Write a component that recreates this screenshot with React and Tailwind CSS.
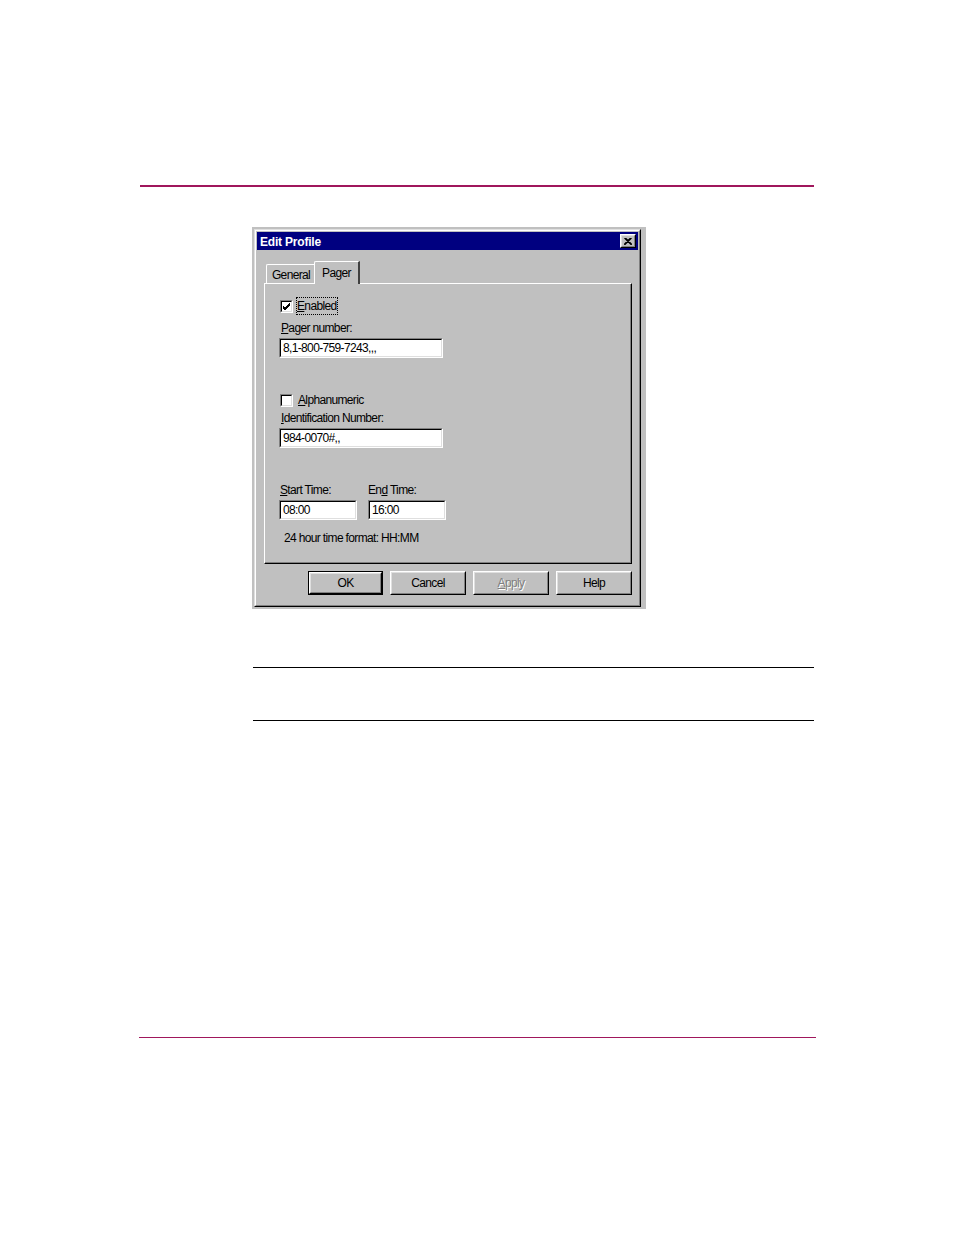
const raised =
  "border border-t-white border-l-white border-r-black border-b-black";

const Field = ({ value, width }) => (
  <div
    className={`${width} h-[20px] border border-t-[#808080] border-l-[#808080] border-r-white border-b-white`}
  >
    <div className="h-full border border-t-black border-l-black border-r-[#dfdfdf] border-b-[#dfdfdf] bg-white pl-[2px] text-[12px] leading-[16px] text-black">
      {value}
    </div>
  </div>
);

const Check = ({ checked }) => (
  <div className="w-[13px] h-[13px] border border-t-[#808080] border-l-[#808080] border-r-white border-b-white">
    <div className="w-full h-full border border-t-black border-l-black border-r-[#dfdfdf] border-b-[#dfdfdf] bg-white flex items-center justify-center">
      {checked && (
        <svg width="9" height="9" viewBox="0 0 9 9">
          <path d="M1 4 L3 6 L8 1 M1 5 L3 7 L8 2 M1 6 L3 8 L8 3" stroke="black" strokeWidth="1" fill="none" />
        </svg>
      )}
    </div>
  </div>
);

const Button = ({ children, isDefault, disabled, width = "w-[76px]" }) => (
  <div className={`${width} h-[24px] ${isDefault ? "border border-black" : ""}`}>
    <div className={`h-full ${raised}`}>
      <div className="h-full border border-t-[#dfdfdf] border-l-[#dfdfdf] border-r-[#808080] border-b-[#808080] flex items-center justify-center text-[12px]">
        {disabled ? (
          <span className="text-[#808080] [text-shadow:1px_1px_0_white]">{children}</span>
        ) : (
          <span className="text-black">{children}</span>
        )}
      </div>
    </div>
  </div>
);

const Label = ({ children, className = "" }) => (
  <div className={`text-[12px] leading-[14px] text-black ${className}`}>{children}</div>
);

export default function App() {
  return (
    <div className="w-[954px] h-[1235px] bg-white font-['Liberation_Sans',Arial,sans-serif] tracking-[-0.65px]">
      <div className="pt-[185px] pl-[140px]">
        <div className="w-[674px] h-[2px] bg-[#a0175c]" />
      </div>

      {/* Dialog */}
      <div className="mt-[40px] ml-[252px] w-[394px] h-[382px] bg-[#c0c0c0] pt-[2px] pl-[2px]">
        <div className="w-[387px] h-[378px] border border-t-[#dfdfdf] border-l-[#dfdfdf] border-r-black border-b-black">
          <div className="h-full border border-t-white border-l-white border-r-[#808080] border-b-[#808080] p-[1px]">
            {/* title bar */}
            <div className="h-[18px] bg-[#000080] flex items-center justify-between pl-[3px] pr-[2px]">
              <span className="text-white font-bold text-[12px] tracking-[-0.2px] pt-[2px]">Edit Profile</span>
              <div className={`w-[16px] h-[14px] bg-[#c0c0c0] ${raised}`}>
                <div className="h-full border border-t-[#dfdfdf] border-l-[#dfdfdf] border-r-[#808080] border-b-[#808080] flex items-center justify-center">
                  <svg width="8" height="7" viewBox="0 0 8 7">
                    <path d="M0.5 0 L7.5 7 M1.5 0 L8 6.5 M7.5 0 L0.5 7 M6.5 0 L0 6.5" stroke="black" strokeWidth="1.2" />
                  </svg>
                </div>
              </div>
            </div>

            {/* tabs */}
            <div className="ml-[7px] mt-[11px] flex items-end h-[22px] pl-[2px] relative z-10">
              <div className="w-[49px] h-[19px] border-t border-l border-white rounded-tl-[2px] flex items-center justify-center text-[12px] text-black pt-[1px]">
                General
              </div>
              <div className="w-[46px] h-[23px] -mb-[1px] -ml-[1px] bg-[#c0c0c0] border-t border-l border-white rounded-tl-[2px] border-r-2 border-r-[#404040] flex items-start justify-center pt-[2px] text-[12px] text-black">
                Pager
              </div>
            </div>

            {/* tab panel */}
            <div className="ml-[7px] w-[368px] h-[281px] border-t border-l border-white border-r border-b border-r-black border-b-black">
              <div className="h-full border-r border-b border-[#808080] pl-[15px] pt-[13px]">
                <div className="flex items-center">
                  <Check checked />
                  <div className="ml-[3px] px-[1px] h-[18px] flex items-center outline-1 outline-dotted outline-black -outline-offset-1">
                    <Label>
                      <span className="underline">E</span>nabled
                    </Label>
                  </div>
                </div>
                <Label className="mt-[6px] ml-[1px]">
                  <span className="underline">P</span>ager number:
                </Label>
                <div className="mt-[3px] -ml-[1px]">
                  <Field value="8,1-800-759-7243,,," width="w-[164px]" />
                </div>

                <div className="flex items-center mt-[35px]">
                  <Check />
                  <Label className="ml-[5px]">
                    <span className="underline">A</span>lphanumeric
                  </Label>
                </div>
                <Label className="mt-[4px] ml-[1px]">
                  <span className="underline">I</span>dentification Number:
                </Label>
                <div className="mt-[3px] -ml-[1px]">
                  <Field value="984-0070#,," width="w-[164px]" />
                </div>

                <div className="flex mt-[35px] -ml-[1px] gap-[11px]">
                  <div>
                    <Label className="ml-[1px]">
                      <span className="underline">S</span>tart Time:
                    </Label>
                    <div className="mt-[3px]">
                      <Field value="08:00" width="w-[78px]" />
                    </div>
                  </div>
                  <div>
                    <Label>
                      En<span className="underline">d</span> Time:
                    </Label>
                    <div className="mt-[3px]">
                      <Field value="16:00" width="w-[78px]" />
                    </div>
                  </div>
                </div>
                <Label className="mt-[11px] ml-[4px]">24 hour time format: HH:MM</Label>
              </div>
            </div>

            {/* buttons */}
            <div className="mt-[7px] ml-[51px] flex gap-[7px]">
              <Button isDefault width="w-[75px]">OK</Button>
              <Button width="w-[76px]">Cancel</Button>
              <Button disabled width="w-[76px]">
                <span className="underline">A</span>pply
              </Button>
              <Button width="w-[76px]">Help</Button>
            </div>
          </div>
        </div>
      </div>

      <div className="mt-[58px] ml-[253px] w-[561px] h-[1px] bg-black" />
      <div className="mt-[52px] ml-[253px] w-[561px] h-[1px] bg-black" />
      <div className="mt-[316px] ml-[139px] w-[677px] h-[1px] bg-[#a0175c]" />
    </div>
  );
}
